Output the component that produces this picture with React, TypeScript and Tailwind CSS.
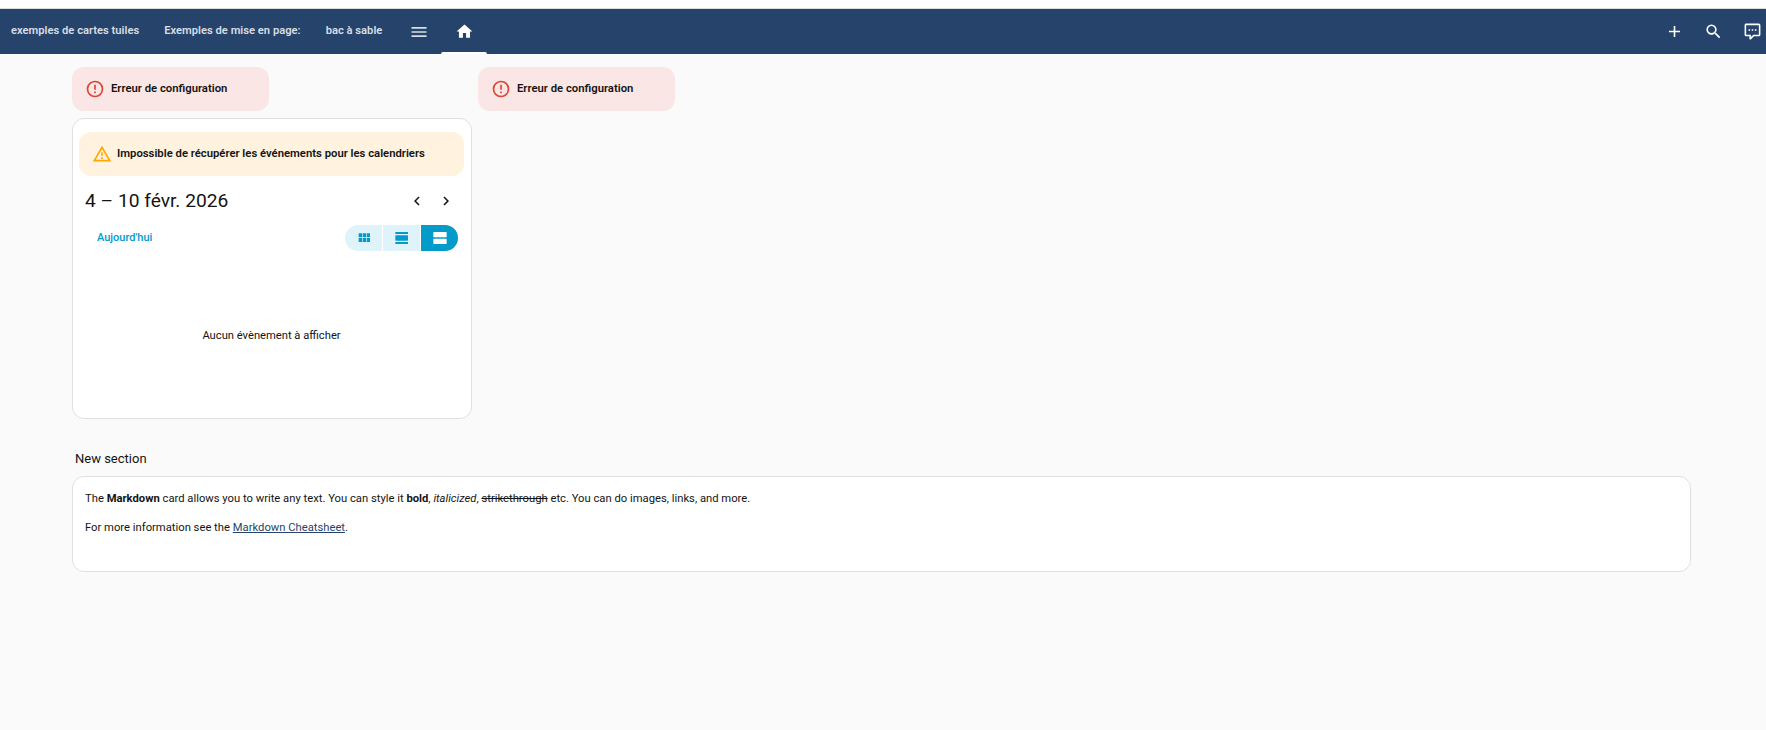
const MDI = {
  home: "M10,20V14H14V20H19V12H22L12,3L2,12H5V20H10Z",
  menu: "M3,6H21V8H3V6M3,11H21V13H3V11M3,16H21V18H3V16Z",
  plus: "M19,13H13V19H11V13H5V11H11V5H13V11H19V13Z",
  search:
    "M9.5,3A6.5,6.5 0 0,1 16,9.5C16,11.11 15.41,12.59 14.44,13.73L14.71,14H15.5L20.5,19L19,20.5L14,15.5V14.71L13.73,14.44C12.59,15.41 11.11,16 9.5,16A6.5,6.5 0 0,1 3,9.5A6.5,6.5 0 0,1 9.5,3M9.5,5C7,5 5,7 5,9.5C5,12 7,14 9.5,14C12,14 14,12 14,9.5C14,7 12,5 9.5,5Z",
  comment:
    "M9,22A1,1 0 0,1 8,21V18H4A2,2 0 0,1 2,16V4C2,2.89 2.9,2 4,2H20A2,2 0 0,1 22,4V16A2,2 0 0,1 20,18H13.9L10.2,21.71C10,21.9 9.75,22 9.5,22V22H9M10,16V19.08L13.08,16H20V4H4V16H10M17,11H15V9H17V11M13,11H11V9H13V11M9,11H7V9H9V11Z",
  alertCircle:
    "M11,15H13V17H11V15M11,7H13V13H11V7M12,2C6.47,2 2,6.5 2,12A10,10 0 0,0 12,22A10,10 0 0,0 22,12A10,10 0 0,0 12,2M12,20A8,8 0 0,1 4,12A8,8 0 0,1 12,4A8,8 0 0,1 20,12A8,8 0 0,1 12,20Z",
  alertTriangle: "M12,2L1,21H23M12,6L19.53,19H4.47M11,10V14H13V10M11,16V18H13V16",
  left: "M15.41,16.58L10.83,12L15.41,7.41L14,6L8,12L14,18L15.41,16.58Z",
  right: "M8.59,16.58L13.17,12L8.59,7.41L10,6L16,12L10,18L8.59,16.58Z",
  module: "M16,5V11H21V5M10,11H15V5H10M16,18H21V12H16M10,18H15V12H10M4,18H9V12H4M4,11H9V5H4V11Z",
  day: "M2,3V6H21V3M20,8H3A1,1 0 0,0 2,9V15A1,1 0 0,0 3,16H20A1,1 0 0,0 21,15V9A1,1 0 0,0 20,8M2,21H21V18H2V21Z",
  agenda:
    "M21,13H3A1,1 0 0,0 2,14V20A1,1 0 0,0 3,21H21A1,1 0 0,0 22,20V14A1,1 0 0,0 21,13M21,3H3A1,1 0 0,0 2,4V10A1,1 0 0,0 3,11H21A1,1 0 0,0 22,10V4A1,1 0 0,0 21,3Z",
};

function Icon({ d, className }: { d: string; className: string }) {
  return (
    <svg viewBox="0 0 24 24" className={className} fill="currentColor">
      <path d={d} />
    </svg>
  );
}

function ConfigError() {
  return (
    <div className="flex items-center w-[197px] h-[44px] pl-[13px] rounded-xl bg-[#fae6e4]">
      <Icon d={MDI.alertCircle} className="w-[20px] h-[20px] text-[#db4437]" />
      <span className="ml-[6px] text-[11.3px] font-semibold text-[#141414]">Erreur de configuration</span>
    </div>
  );
}

export default function App() {
  return (
    <div className="min-h-[730px] bg-[#fafafa] font-['Roboto',sans-serif] text-[#141414]">
      {/* Top strip */}
      <div className="h-[9px] bg-white border-b border-[#dcdcdc]" />

      {/* Header */}
      <header className="flex items-center h-[45px] bg-[#26446b] text-[#d7dde5] text-[11.2px] font-semibold">
        <span className="ml-[11px]">exemples de cartes tuiles</span>
        <span className="ml-[25px]">Exemples de mise en page:</span>
        <span className="ml-[25px]">bac à sable</span>
        <Icon d={MDI.menu} className="ml-[27px] w-[20px] h-[20px]" />
        <div className="relative flex items-center justify-center self-stretch ml-[12px] w-[46px] text-white">
          <Icon d={MDI.home} className="w-[19px] h-[19px]" />
          <div className="absolute bottom-0 inset-x-0 h-[2px] bg-white rounded-t-sm" />
        </div>
        <div className="ml-auto flex items-center gap-5 pr-[4px] text-white">
          <Icon d={MDI.plus} className="w-[19px] h-[19px]" />
          <Icon d={MDI.search} className="w-[19px] h-[19px]" />
          <Icon d={MDI.comment} className="w-[19px] h-[19px]" />
        </div>
      </header>

      <main className="pl-[72px] pr-[75px] pt-[13px]">
        <div className="flex gap-[6px]">
          <div className="flex flex-col gap-[7px] w-[400px]">
            <ConfigError />

            {/* Calendar card */}
            <div className="h-[301px] bg-white border border-[#e0e0e0] rounded-xl pl-[6px] pr-[7px] pt-[13px]">
              <div className="flex items-center h-[44px] pl-[13px] rounded-xl bg-[#fff2de]">
                <Icon d={MDI.alertTriangle} className="w-[20px] h-[20px] text-[#ffa600]" />
                <span className="ml-[5px] text-[11.3px] font-semibold">
                  Impossible de récupérer les événements pour les calendriers
                </span>
              </div>

              <div className="flex items-center justify-between mt-[7px] h-[36px] pl-[6px] pr-[9px]">
                <span className="text-[19.2px] leading-none">4 – 10 févr. 2026</span>
                <div className="flex items-center gap-[11px] text-[#141414]">
                  <Icon d={MDI.left} className="w-[18px] h-[18px]" />
                  <Icon d={MDI.right} className="w-[18px] h-[18px]" />
                </div>
              </div>

              <div className="flex items-center justify-between mt-[6px] pl-[18px] pr-[6px]">
                <span className="text-[11px] font-medium text-[#039bca]">Aujourd'hui</span>
                <div className="flex h-[26px] w-[113px] rounded-full overflow-hidden text-[#039bca]">
                  <div className="flex w-[38px] items-center justify-center bg-[#dff3fb] border-r border-white">
                    <Icon d={MDI.module} className="w-[16px] h-[16px]" />
                  </div>
                  <div className="flex w-[38px] items-center justify-center bg-[#dff3fb] border-r border-white">
                    <Icon d={MDI.day} className="w-[16px] h-[16px]" />
                  </div>
                  <div className="flex flex-1 items-center justify-center bg-[#039bca] text-white">
                    <Icon d={MDI.agenda} className="w-[16px] h-[16px]" />
                  </div>
                </div>
              </div>

              <p className="mt-[77px] text-center text-[11.2px]">Aucun évènement à afficher</p>
            </div>
          </div>

          <div className="w-[400px]">
            <ConfigError />
          </div>
        </div>

        {/* New section */}
        <h2 className="mt-[32px] ml-[3px] text-[13px] leading-[16px] font-normal">New section</h2>
        <div className="mt-[9px] h-[96px] bg-white border border-[#e0e0e0] rounded-xl pl-[12px] pt-[15px] text-[11.24px] leading-[14px]">
          <p>
            The <strong>Markdown</strong> card allows you to write any text. You can style it <strong>bold</strong>,{" "}
            <em>italicized</em>, <del>strikethrough</del> etc. You can do images, links, and more.
          </p>
          <p className="mt-[15px]">
            For more information see the <a className="text-[#26446b] underline">Markdown Cheatsheet</a>.
          </p>
        </div>
      </main>
    </div>
  );
}
